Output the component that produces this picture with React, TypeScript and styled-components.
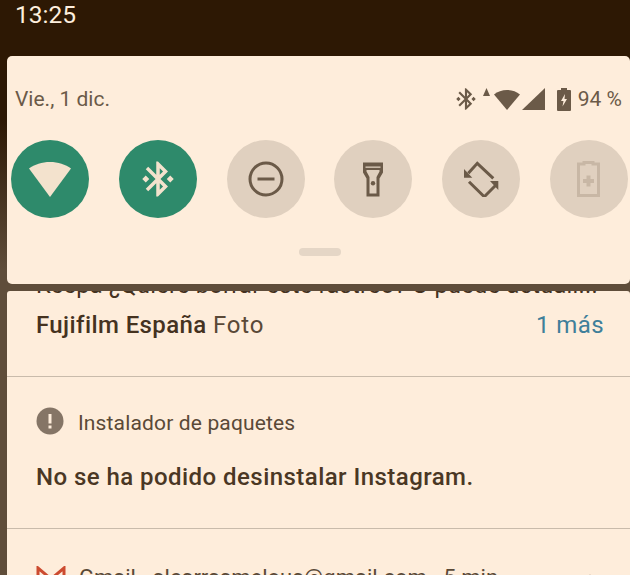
import React from "react";
import styled, { createGlobalStyle } from "styled-components";

const Global = createGlobalStyle`
  html, body { margin: 0; padding: 0; background: #2d1804; }
  * { box-sizing: border-box; }
`;

const Screen = styled.div`
  width: 630px;
  height: 575px;
  overflow: hidden;
  display: flex;
  flex-direction: column;
  font-family: Roboto, "Liberation Sans", sans-serif;
  background: linear-gradient(180deg, #2d1804 0, #2d1804 120px, #5f4d3a 270px, #5f4d3a 100%);
`;

const StatusBar = styled.div`
  height: 56px;
  flex: none;
  padding: 1px 0 0 15px;
  background: #2d1804;
  color: #fdeedd;
  font-size: 24.5px;
  line-height: 28px;
`;

const Panel = styled.section`
  flex: none;
  height: 228px;
  margin-left: 7px;
  background: #feeddb;
  border-radius: 5px;
  display: flex;
  flex-direction: column;
  padding: 0 2px 0 4px;
`;

const Header = styled.div`
  height: 84px;
  flex: none;
  display: flex;
  align-items: center;
  justify-content: space-between;
  padding: 2px 6px 0 4px;
  color: #6b5a48;
  font-size: 21px;
`;

const StatusIcons = styled.div`
  display: flex;
  align-items: center;
`;

const Percent = styled.span`
  margin-left: 7px;
`;

const Tiles = styled.div`
  display: flex;
  justify-content: space-between;
  flex: none;
`;

const Tile = styled.div<{ $active?: boolean }>`
  width: 78px;
  height: 78px;
  border-radius: 50%;
  background: ${(p) => (p.$active ? "#2e8a6b" : "#e0d0bf")};
  display: flex;
  align-items: center;
  justify-content: center;
`;

const Handle = styled.div`
  width: 42px;
  height: 8px;
  flex: none;
  margin: 30px auto 0;
  border-radius: 4px;
  background: #e5d6c6;
`;

const Card = styled.section`
  flex: 1;
  margin: 7px 0 0 7px;
  background: #feeddb;
  border-radius: 3px 3px 0 0;
  overflow: hidden;
  color: #45321f;
`;

const Group = styled.div`
  display: flow-root;
  height: 86px;
  padding: 0 26px 0 29px;
  border-bottom: 1px solid #c9bbab;
`;

const ClippedLine = styled.div`
  margin-top: -19px;
  height: 26px;
  line-height: 26px;
  font-size: 23.5px;
  letter-spacing: 0.3px;
  white-space: nowrap;
  overflow: hidden;
  color: #45321f;
`;

const SummaryRow = styled.div`
  margin-top: 11px;
  display: flex;
  justify-content: space-between;
  line-height: 32px;
  font-size: 24px;
  letter-spacing: 0.4px;
`;

const Strong = styled.span`
  font-weight: 500;
`;

const Light = styled.span`
  color: #5a4937;
  letter-spacing: 0.8px;
`;

const More = styled.span`
  color: #3f7f9a;
`;

const Notification = styled.div`
  height: 152px;
  padding: 30px 26px 0 29px;
  border-bottom: 1px solid #c9bbab;
`;

const AppRow = styled.div`
  display: flex;
  align-items: center;
  gap: 14px;
  height: 28px;
  color: #5a4937;
  font-size: 21px;
  letter-spacing: 0.15px;
  white-space: nowrap;
`;

const AppName = styled.span`
  padding-top: 3px;
`;

const Message = styled.div`
  margin-top: 27px;
  font-size: 24px;
  letter-spacing: 0.45px;
  line-height: 30px;
  font-weight: 500;
  white-space: nowrap;
  color: #4a3724;
`;

const GmailRow = styled.div`
  display: flex;
  align-items: flex-start;
  padding: 37px 26px 0 29px;
  color: #5a4937;
  font-size: 22px;
  line-height: 24px;
  white-space: nowrap;
`;

const GmailIcon = styled.svg`
  flex: none;
  margin-right: 13px;
`;

const Chevron = styled.svg`
  margin: 8px 6px 0 auto;
  flex: none;
`;

const BT = "M7 12l-2-2-2 2 2 2 2-2zm10.71-4.29L12 2h-1v7.59L6.41 5 5 6.41 10.59 12 5 17.59 6.41 19 11 14.41V22h1l5.71-5.71-4.3-4.29 4.3-4.29zM13 5.83l1.88 1.88L13 9.59V5.83zm1.88 10.46L13 18.17v-3.76l1.88 1.88zM19 10l-2 2 2 2 2-2-2-2z";

const Ic = { on: "#f3e2cd", off: "#6b5a48", dim: "#c8b7a5", tile: "#e0d0bf" };

export default function App() {
  return (
    <Screen>
      <Global />
      <StatusBar>13:25</StatusBar>
      <Panel>
        <Header>
          <span>Vie., 1 dic.</span>
          <StatusIcons>
            <svg width="26" height="26" viewBox="0 0 24 24" fill={Ic.off}><path d={BT} /></svg>
            <svg width="9" height="22" viewBox="0 0 9 22" fill={Ic.off} style={{ marginLeft: 3 }}><path d="M4.500 0 8 8H1z" /></svg>
            <svg width="28" height="24" viewBox="0 0 28 24" fill={Ic.off} style={{ marginLeft: 2 }}><path d="M1 7.500C4.500 4.500 9 3 14 3s9.500 1.500 13 4.500L14 23z" /></svg>
            <svg width="23" height="22" viewBox="0 0 23 22" fill={Ic.off} style={{ marginLeft: 1 }}><path d="M23 0v22H0z" /></svg>
            <svg width="14" height="23" viewBox="0 0 14 23" style={{ marginLeft: 12 }}>
              <path d="M4 0h6v2h3a1 1 0 0 1 1 1v19a1 1 0 0 1-1 1H1a1 1 0 0 1-1-1V3a1 1 0 0 1 1-1h3z" fill={Ic.off} />
              <path d="M8 6 4 13h2.500L5.500 18.500 10 11H7.500z" fill="#feeddb" />
            </svg>
            <Percent>94 %</Percent>
          </StatusIcons>
        </Header>
        <Tiles>
          <Tile $active>
            <svg width="44" height="37" viewBox="0 0 44 37" fill={Ic.on}><path d="M1 7.500C6.500 3.500 14 1 22 1s15.500 2.500 21 6.500L22 36z" /></svg>
          </Tile>
          <Tile $active>
            <svg width="42" height="42" viewBox="0 0 24 24" fill={Ic.on}><path d={BT} /></svg>
          </Tile>
          <Tile>
            <svg width="36" height="36" viewBox="0 0 36 36" fill="none" stroke={Ic.off} strokeWidth="3"><circle cx="18" cy="18" r="16" /><path d="M9.500 18h17" /></svg>
          </Tile>
          <Tile>
            <svg width="22" height="36" viewBox="0 0 22 36">
              <path d="M1 1.500h20v10l-3.500 6v18h-13v-18L1 11.500z" fill={Ic.off} />
              <path d="M3.500 5.500h15v1.300h-15z" fill={Ic.tile} />
              <path d="M4.500 9h13v1.500l-3 5.500v16.500h-7V16l-3-5.500z" fill={Ic.tile} />
              <circle cx="11" cy="22.300" r="2.200" fill={Ic.off} />
            </svg>
          </Tile>
          <Tile>
            <svg width="36" height="36" viewBox="0 0 36 36" fill="none" stroke={Ic.off} strokeWidth="3">
              <path d="M5.300 12.300 14.300 2.300l16 15" />
              <path d="M6 20.700l15.300 15 12.400-12.400" />
              <path d="M1 8v8.700h8.300z" fill={Ic.off} stroke="none" />
              <path d="M35.300 20v9L27 20z" fill={Ic.off} stroke="none" />
            </svg>
          </Tile>
          <Tile>
            <svg width="23" height="36" viewBox="0 0 23 36" fill="none" stroke={Ic.dim} strokeWidth="3"><path d="M7 3V1.500h9V3h5.500v31.500h-20V3z" /><path d="M11.500 14.500v11M6 20h11" strokeWidth="4" /></svg>
          </Tile>
        </Tiles>
        <Handle />
      </Panel>
      <Card>
        <Group>
          <ClippedLine>Keepa ¿Quiere borrar este rastreo? O puede actuali...</ClippedLine>
          <SummaryRow>
            <span><Strong>Fujifilm España</Strong> <Light>Foto</Light></span>
            <More>1 más</More>
          </SummaryRow>
        </Group>
        <Notification>
          <AppRow>
            <svg width="28" height="28" viewBox="0 0 28 28"><circle cx="14" cy="14" r="13.500" fill="#857566" /><rect x="12.500" y="7" width="3" height="9.500" fill="#feeddb" /><rect x="12.500" y="18.500" width="3" height="3" fill="#feeddb" /></svg>
            <AppName>Instalador de paquetes</AppName>
          </AppRow>
          <Message>No se ha podido desinstalar Instagram.</Message>
        </Notification>
        <GmailRow>
          <GmailIcon width="30" height="22" viewBox="0 0 30 22" fill="none" stroke="#cc4b30" strokeWidth="3"><path d="M2 22V2l13 11L28 2v20" /></GmailIcon>
          Gmail · alcarrasmelous@gmail.com · 5 min
          <Chevron width="16" height="10" viewBox="0 0 16 10" fill="none" stroke="#5a4937" strokeWidth="2"><path d="M2 8l6-6 6 6" /></Chevron>
        </GmailRow>
      </Card>
    </Screen>
  );
}
